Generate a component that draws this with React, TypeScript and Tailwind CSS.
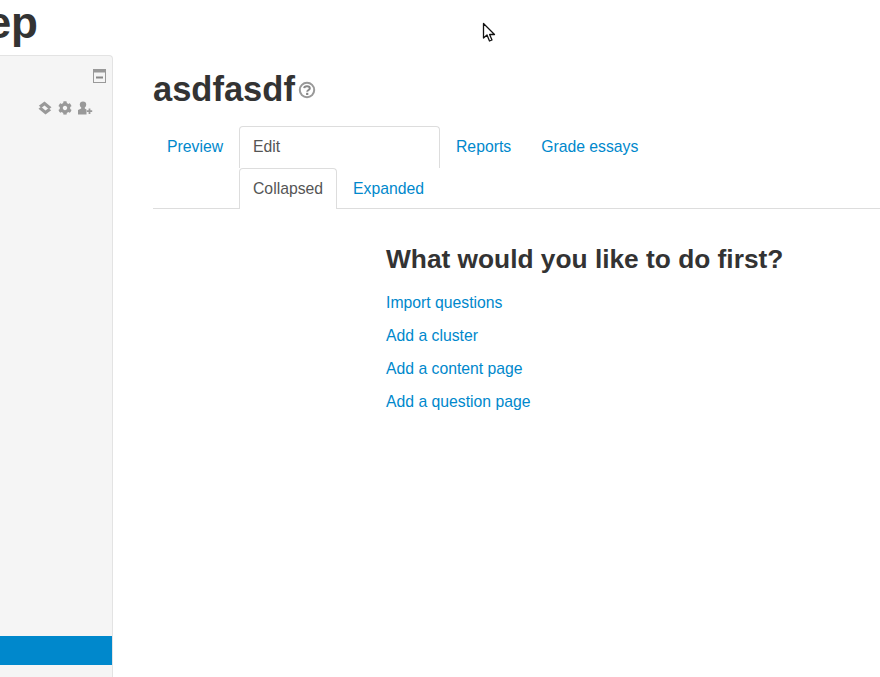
import { FaCog } from "react-icons/fa";

const font = "[font-family:'Liberation_Sans',Arial,sans-serif]";

function Cursor() {
  return (
    <svg className="absolute left-[482px] top-[22px]" width="15" height="21" viewBox="0 0 15 21">
      <path
        d="M1.5 1.5V16L5 13L7.5 19L10 18L7.6 12.5H12.5Z"
        fill="#fff"
        stroke="#111"
        strokeWidth="1.3"
        strokeLinejoin="round"
      />
    </svg>
  );
}

function HelpIcon() {
  return (
    <svg width="18" height="18" viewBox="0 0 18 18" className="ml-[3px] mt-[12px]">
      <circle cx="9" cy="9" r="7.2" fill="none" stroke="#999" strokeWidth="2" />
      <path d="M6.2 7.2C6.4 4.6 11.8 4.6 11.8 7.4C11.8 9 9.2 9 9.2 10.8" fill="none" stroke="#888" strokeWidth="2" />
      <rect x="8.1" y="11.8" width="2.2" height="2.2" fill="#888" />
    </svg>
  );
}

function Sidebar() {
  return (
    <div className="w-[113px] shrink-0">
      <div className="flex h-[55px] justify-end overflow-hidden pr-[75px]">
        <h1 className="shrink-0 text-[44px] font-bold leading-[46px] text-[#333]">Step</h1>
      </div>
      <div className="h-[622px] rounded-tr-[4px] border-r border-t border-[#e3e3e3] bg-[#f5f5f5] pt-[13px]">
        <div className="flex justify-end pr-[6px]">
          <svg width="13" height="14" viewBox="0 0 13 14">
            <rect x="0.5" y="0.5" width="12" height="13" fill="#f5f5f5" stroke="#999" />
            <rect x="0.5" y="0.5" width="12" height="3" fill="#999" />
            <rect x="3" y="7.5" width="7" height="2" fill="#888" />
          </svg>
        </div>
        <div className="mt-[18px] flex items-center justify-end gap-[6px] pr-[19px] text-[#999]">
          <svg width="14" height="14" viewBox="0 0 14 14">
            <path d="M6.5 0.5L13.5 6.2L11 8.2L6.5 4.4L3.6 6.8L0.8 4.8Z" fill="#999" />
            <path d="M0.5 7.8L3 5.8L7.5 9.6L10.4 7.2L13.2 9.2L7.5 13.5Z" fill="#999" />
          </svg>
          <FaCog size={14} />
          <svg width="15" height="14" viewBox="0 0 15 14">
            <circle cx="5" cy="3.6" r="3.2" fill="#999" />
            <path d="M3.2 6H6.8V7.6L8.5 8.4V13.5H0V9L3.2 7.6Z" fill="#999" />
            <path d="M11.5 7.5V13M8.8 10.2H14.2" stroke="#999" strokeWidth="1.8" />
          </svg>
        </div>
        <div className="mt-[521px] h-[29px] bg-[#0088cc]" />
      </div>
    </div>
  );
}

export default function App() {
  return (
    <div className={`${font} relative flex h-[677px] w-[880px] overflow-hidden bg-white`}>
      <Sidebar />
      <main className="flex-1 pl-[40px]">
        <div className="flex h-[126px] pt-[69px]">
          <h2 className="text-[34.5px] font-bold leading-[40px] text-[#333]">asdfasdf</h2>
          <HelpIcon />
        </div>

        {/* Tabs */}
        <div className="flex h-[42px] text-[15.75px] leading-[20px] text-[#0088cc]">
          <a className="w-[86px] pb-[10px] pl-[14px] pt-[11px]">Preview</a>
          <a className="w-[201px] rounded-t-[4px] border-x border-t border-[#ddd] px-[13px] py-[10px] text-[#555]">Edit</a>
          <a className="pb-[10px] pl-[16px] pr-[15px] pt-[11px]">Reports</a>
          <a className="pb-[10px] pl-[15px] pt-[11px]">Grade essays</a>
        </div>
        <div className="flex h-[41px] border-b border-[#ddd] pl-[86px] text-[15.75px] leading-[20px] text-[#0088cc]">
          <a className="h-[41px] w-[98px] rounded-t-[4px] border-x border-t border-[#ddd] bg-white px-[13px] py-[10px] text-[#555]">Collapsed</a>
          <a className="pb-[10px] pl-[16px] pt-[11px]">Expanded</a>
        </div>

        <div className="ml-[233px] mt-[31px]">
          <h3 className="text-[26.3px] font-bold leading-[38px] text-[#333]">What would you like to do first?</h3>
          <ul className="mt-[15px] flex flex-col gap-[13px] text-[15.75px] leading-[20px] text-[#0088cc]">
            <li>Import questions</li>
            <li>Add a cluster</li>
            <li>Add a content page</li>
            <li>Add a question page</li>
          </ul>
        </div>
      </main>
      <Cursor />
    </div>
  );
}
